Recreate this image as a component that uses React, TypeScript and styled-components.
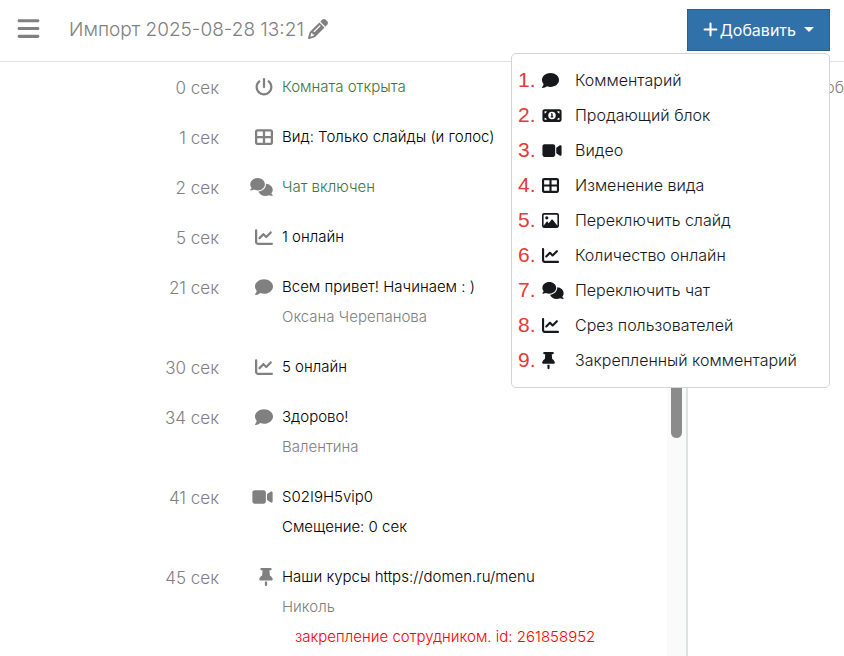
import React from "react";
import styled, { createGlobalStyle } from "styled-components";
import {
  FaBars,
  FaChartLine,
  FaComment,
  FaComments,
  FaMoneyBill1,
  FaPencil,
  FaPlus,
  FaPowerOff,
  FaRegImage,
  FaTableCellsLarge,
  FaThumbtack,
  FaVideo,
} from "react-icons/fa6";
import type { IconType } from "react-icons";

const GlobalStyle = createGlobalStyle`
  *, *::before, *::after { box-sizing: border-box; }
  body {
    margin: 0;
    background: #fff;
    color: #000;
    font-family: Inter, "Open Sans", sans-serif;
    font-size: 15px;
    font-weight: 400;
    overflow: hidden;
  }
  button { font: inherit; }
`;

const Shell = styled.div`
  display: flex;
  flex-direction: column;
  height: 100vh;
`;

const Header = styled.header`
  display: flex;
  align-items: center;
  flex: none;
  height: 62px;
  padding: 0 14px 2px 16px;
  border-bottom: 1px solid #dee2e6;
`;

const IconButton = styled.button`
  display: flex;
  padding: 0 0 2px;
  border: 0;
  background: none;
  color: #808080;
  cursor: pointer;
`;

const Title = styled.h1`
  margin: 0 4px 0 28px;
  color: #808080;
  font-size: 19px;
  font-weight: 300;
  line-height: 30px;
  white-space: nowrap;
`;

const MenuAnchor = styled.div`
  position: relative;
  margin-left: auto;
`;

const GlyphBox = styled.span<{ $width: number; $height: number }>`
  display: flex;

  svg {
    width: ${({ $width }) => $width}px;
    height: ${({ $height }) => $height}px;
  }
`;

const AddButton = styled.button`
  display: flex;
  align-items: center;
  gap: 2px;
  height: 42px;
  padding: 0 15px;
  border: 1px solid #286090;
  background: #3071a9;
  color: #fff;
  font-size: 16px;
  cursor: pointer;
`;

const Caret = styled.span`
  margin-left: 6px;
  border-top: 5px solid currentColor;
  border-right: 5px solid transparent;
  border-left: 5px solid transparent;
`;

const Menu = styled.ul`
  position: absolute;
  top: 100%;
  right: 0;
  z-index: 2;
  width: 319px;
  margin: 2px 0 0;
  padding: 9px 0;
  border: 1px solid #d3d5d7;
  border-radius: 5px;
  background: #fff;
  list-style: none;
`;

const MenuItem = styled.button`
  display: grid;
  grid-template-columns: 24px 33px 1fr;
  align-items: center;
  width: 100%;
  height: 35px;
  padding: 0 0 0 6px;
  border: 0;
  background: none;
  color: #16181b;
  font-size: 16px;
  font-weight: 300;
  text-align: left;
  white-space: nowrap;
  cursor: pointer;
`;

const MenuNumber = styled.span`
  color: #e53935;
  font-family: "Liberation Sans", Arial, sans-serif;
  font-size: 21px;
  font-weight: 400;
  line-height: 24px;
`;

const Workspace = styled.main`
  display: flex;
  flex: 1;
  min-height: 0;
`;

const Timeline = styled.section`
  display: flex;
  flex: 0 0 688px;
  border-right: 2px solid #dee2e6;
  overflow: hidden;
`;

const Events = styled.ol`
  flex: 1;
  margin: 0;
  padding: 10px 0 0;
  list-style: none;
`;

const Event = styled.li`
  display: grid;
  grid-template-columns: 219px 54px 1fr;
  margin-bottom: 20px;
  line-height: 30px;
`;

const Time = styled.time`
  padding-top: 2px;
  color: #808080;
  font-size: 17px;
  font-weight: 300;
  line-height: 28px;
  text-align: right;
`;

const EventIcon = styled.span`
  display: flex;
  align-items: center;
  justify-content: flex-end;
  height: 30px;
  color: #808080;
`;

const EventText = styled.div`
  padding-left: 9px;
  font-weight: 300;
`;

const Line = styled.div<{ $color?: string; $indent?: boolean }>`
  padding-left: ${({ $indent }) => ($indent ? "13px" : "0")};
  color: ${({ $color }) => $color || "#000"};
`;

const ScrollTrack = styled.div`
  flex: 0 0 19px;
  padding: 0 4px;
  background: #fafafa;
`;

const ScrollThumb = styled.div`
  height: 376px;
  border-radius: 6px;
  background: #8b8b8b;
`;

const SidePanel = styled.aside`
  flex: 1;
  padding: 10px 0;
  overflow: hidden;
  color: #808080;
  font-size: 16px;
  font-weight: 300;
  line-height: 30px;
  text-align: right;
`;

const actions: { label: string; icon: IconType }[] = [
  { label: "Комментарий", icon: FaComment },
  { label: "Продающий блок", icon: FaMoneyBill1 },
  { label: "Видео", icon: FaVideo },
  { label: "Изменение вида", icon: FaTableCellsLarge },
  { label: "Переключить слайд", icon: FaRegImage },
  { label: "Количество онлайн", icon: FaChartLine },
  { label: "Переключить чат", icon: FaComments },
  { label: "Срез пользователей", icon: FaChartLine },
  { label: "Закрепленный комментарий", icon: FaThumbtack },
];

const GREEN = "#3c763d";
const GREY = "#808080";

type TextLine = { text: string; color?: string; indent?: boolean };

const events: { time: string; icon: IconType; lines: TextLine[] }[] = [
  { time: "0 сек", icon: FaPowerOff, lines: [{ text: "Комната открыта", color: GREEN }] },
  { time: "1 сек", icon: FaTableCellsLarge, lines: [{ text: "Вид: Только слайды (и голос)" }] },
  { time: "2 сек", icon: FaComments, lines: [{ text: "Чат включен", color: GREEN }] },
  { time: "5 сек", icon: FaChartLine, lines: [{ text: "1 онлайн" }] },
  {
    time: "21 сек",
    icon: FaComment,
    lines: [{ text: "Всем привет! Начинаем : )" }, { text: "Оксана Черепанова", color: GREY }],
  },
  { time: "30 сек", icon: FaChartLine, lines: [{ text: "5 онлайн" }] },
  {
    time: "34 сек",
    icon: FaComment,
    lines: [{ text: "Здорово!" }, { text: "Валентина", color: GREY }],
  },
  {
    time: "41 сек",
    icon: FaVideo,
    lines: [{ text: "S02I9H5vip0" }, { text: "Смещение: 0 сек" }],
  },
  {
    time: "45 сек",
    icon: FaThumbtack,
    lines: [
      { text: "Наши курсы https://domen.ru/menu" },
      { text: "Николь", color: GREY },
      { text: "закрепление сотрудником. id: 261858952", color: "#ff0000", indent: true },
    ],
  },
];

/* Width-to-height ratios of the icons that are not square. */
const ratios = new Map<IconType, number>([
  [FaComments, 640 / 512],
  [FaMoneyBill1, 576 / 512],
  [FaVideo, 576 / 512],
  [FaThumbtack, 384 / 512],
  [FaPlus, 448 / 512],
]);

function Glyph({ icon: Icon, size }: { icon: IconType; size: number }) {
  return (
    <GlyphBox $width={Math.ceil(size * (ratios.get(Icon) ?? 1))} $height={size}>
      <Icon aria-hidden />
    </GlyphBox>
  );
}

export default function App() {
  return (
    <>
      <GlobalStyle />
      <Shell>
        <Header>
          <IconButton aria-label="Меню">
            <FaBars size={25} />
          </IconButton>
          <Title>Импорт 2025-08-28 13:21</Title>
          <IconButton aria-label="Переименовать">
            <FaPencil size={20} />
          </IconButton>
          <MenuAnchor>
            <AddButton aria-haspopup="menu" aria-expanded="true">
              <Glyph icon={FaPlus} size={17} />
              Добавить
              <Caret />
            </AddButton>
            <Menu>
              {actions.map(({ label, icon }, i) => (
                <li key={label}>
                  <MenuItem>
                    <MenuNumber>{i + 1}.</MenuNumber>
                    <Glyph icon={icon} size={17} />
                    <span>{label}</span>
                  </MenuItem>
                </li>
              ))}
            </Menu>
          </MenuAnchor>
        </Header>
        <Workspace>
          <Timeline>
            <Events>
              {events.map(({ time, icon, lines }) => (
                <Event key={time}>
                  <Time>{time}</Time>
                  <EventIcon>
                    <Glyph icon={icon} size={18} />
                  </EventIcon>
                  <EventText>
                    {lines.map((line) => (
                      <Line key={line.text} $color={line.color} $indent={line.indent}>
                        {line.text}
                      </Line>
                    ))}
                  </EventText>
                </Event>
              ))}
            </Events>
            <ScrollTrack>
              <ScrollThumb />
            </ScrollTrack>
          </Timeline>
          <SidePanel>об</SidePanel>
        </Workspace>
      </Shell>
    </>
  );
}
